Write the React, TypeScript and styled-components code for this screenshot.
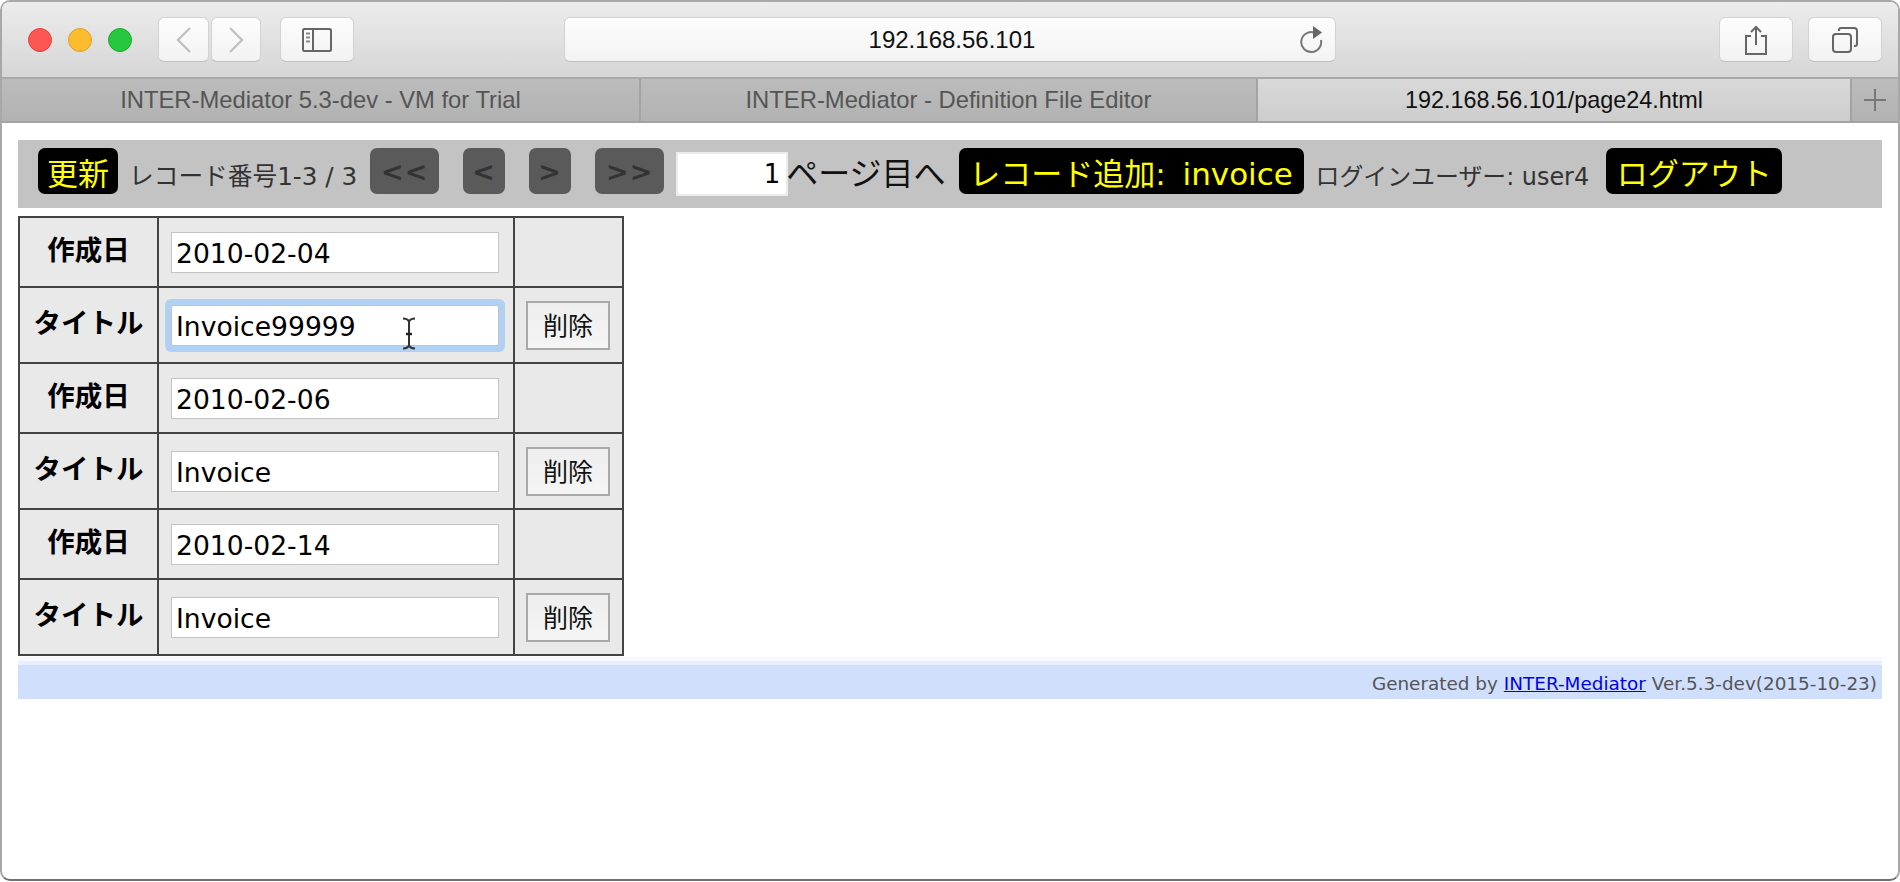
import React from 'react';
import styled, { createGlobalStyle } from 'styled-components';

const GlobalStyle = createGlobalStyle`
  html, body {
    margin: 0;
    padding: 0;
    background: #ffffff;
  }
  * {
    box-sizing: border-box;
  }
`;

const PAGE_FONT = `"DejaVu Sans", "Noto Sans CJK JP", sans-serif`;
const CHROME_FONT = `"Liberation Sans", "Noto Sans CJK JP", sans-serif`;

const Window = styled.div`
  width: 1900px;
  height: 881px;
  background: #ffffff;
  border: 2px solid #a8a8a8;
  border-bottom-color: #707070;
  border-radius: 10px;
  overflow: hidden;
`;

const TitleBar = styled.div`
  display: flex;
  align-items: center;
  height: 75px;
  padding: 0 16px 0 26px;
  background: linear-gradient(#ececec, #d6d6d6);
`;

const Lights = styled.div`
  display: flex;
  gap: 16px;
  margin-right: 26px;
`;

const Light = styled.span<{ $fill: string; $edge: string }>`
  width: 24px;
  height: 24px;
  border-radius: 50%;
  background: ${(p) => p.$fill};
  border: 1px solid ${(p) => p.$edge};
`;

const ToolButton = styled.div<{ $width: number }>`
  display: flex;
  align-items: center;
  justify-content: center;
  width: ${(p) => p.$width}px;
  height: 45px;
  background: linear-gradient(#fdfdfd, #f2f2f2);
  border: 1px solid #d2d2d2;
  border-bottom-color: #c0c0c0;
  border-radius: 6px;
`;

const NavGroup = styled.div`
  display: flex;
  gap: 2px;
  margin-right: 19px;
`;

const AddressBar = styled.div`
  display: grid;
  grid-template-columns: 1fr auto 1fr;
  align-items: center;
  width: 772px;
  height: 45px;
  margin-left: 210px;
  padding: 0 12px 0 16px;
  background: linear-gradient(#fdfdfd, #f3f3f3);
  border: 1px solid #d2d2d2;
  border-bottom-color: #c0c0c0;
  border-radius: 6px;
  font: 24px ${CHROME_FONT};
  color: #111111;
`;

const ReloadSlot = styled.div`
  display: flex;
  justify-content: flex-end;
`;

const RightGroup = styled.div`
  display: flex;
  gap: 15px;
  margin-left: auto;
`;

const TabStrip = styled.div`
  display: flex;
  height: 46px;
  border-top: 2px solid #a9a9a9;
  border-bottom: 2px solid #a3a3a3;
  font: 23.8px ${CHROME_FONT};
`;

const Tab = styled.div<{ $width: number; $active?: boolean }>`
  display: flex;
  align-items: center;
  justify-content: center;
  width: ${(p) => p.$width}px;
  flex: none;
  border-right: 2px solid #a3a3a3;
  color: ${(p) => (p.$active ? '#111111' : '#555555')};
  font-size: ${(p) => (p.$active ? '23.4px' : 'inherit')};
  background: ${(p) =>
    p.$active
      ? 'linear-gradient(#d9d9d9, #cdcdcd)'
      : 'linear-gradient(#bcbcbc, #b2b2b2)'};
`;

const NewTab = styled.div`
  flex: 1;
  display: flex;
  align-items: center;
  justify-content: center;
  background: linear-gradient(#bcbcbc, #b2b2b2);
`;

const Page = styled.div`
  padding: 17px 16px 0 16px;
  font-family: ${PAGE_FONT};
`;

const Navigator = styled.div`
  display: flex;
  align-items: center;
  height: 68px;
  padding: 0 0 6px 20px;
  background: #c3c3c3;
`;

const YellowButton = styled.div<{ $width: number; $gap: number }>`
  display: flex;
  align-items: center;
  justify-content: center;
  flex: none;
  width: ${(p) => p.$width}px;
  height: 46px;
  margin-right: ${(p) => p.$gap}px;
  background: #000000;
  border-radius: 7px;
  color: #ffff00;
  font-size: 31px;
  word-spacing: 7px;
  white-space: nowrap;
`;

const NavLabel = styled.span<{ $size: number; $gap: number }>`
  margin: 6px ${(p) => p.$gap}px 0 0;
  font-size: ${(p) => p.$size}px;
  color: #333333;
  white-space: nowrap;
`;

const PageButton = styled.div<{ $width: number; $gap: number }>`
  display: flex;
  align-items: center;
  justify-content: center;
  flex: none;
  width: ${(p) => p.$width}px;
  height: 46px;
  margin-right: ${(p) => p.$gap}px;
  background: #5a5a5a;
  border-radius: 7px;
  color: #333333;
  font-size: 27px;
  font-weight: 600;
  letter-spacing: 1px;
`;

const PageInput = styled.input`
  flex: none;
  width: 112px;
  height: 44px;
  padding: 0 6px;
  margin-top: 6px;
  background: #ffffff;
  border: 2px solid #ebebeb;
  outline: none;
  text-align: right;
  font: 26px ${PAGE_FONT};
  color: #000000;
`;

const GoLabel = styled.span`
  margin: 0 13px 0 -2px;
  font-size: 32px;
  color: #111111;
  white-space: nowrap;
`;

const RecordTable = styled.table`
  width: 604px;
  margin-top: 8px;
  border-collapse: collapse;
  table-layout: fixed;
  background: #e9e9e9;
`;

const LabelCell = styled.th`
  border: 2px solid #444444;
  padding: 0 0 8px;
  font: 600 27.5px ${PAGE_FONT};
  color: #000000;
`;

const ValueCell = styled.td`
  position: relative;
  border: 2px solid #444444;
  padding: 0 0 0 12px;
`;

const ActionCell = styled.td`
  border: 2px solid #444444;
  padding: 0 0 0 11px;
`;

const Row = styled.tr<{ $height: number }>`
  height: ${(p) => p.$height}px;
`;

const FieldInput = styled.input<{ $focused?: boolean }>`
  display: block;
  width: 328px;
  height: 41px;
  padding: 2px 4px 0;
  background: #ffffff;
  border: 1px solid #c4c4c4;
  outline: none;
  font: 26.6px ${PAGE_FONT};
  color: #000000;
  box-shadow: ${(p) => (p.$focused ? '0 0 0 6px #b0d0f4' : 'none')};
  border-radius: ${(p) => (p.$focused ? '2px' : '0')};
`;

const DeleteButton = styled.div`
  display: flex;
  align-items: center;
  justify-content: center;
  width: 84px;
  height: 49px;
  padding-bottom: 3px;
  background: linear-gradient(#eeeeee, #f5f5f5);
  border: 2px solid #a9a9a9;
  font-size: 25px;
  color: #111111;
`;

const TextCursor = styled.svg`
  position: absolute;
  left: 243px;
  top: 29px;
`;

const Footer = styled.div`
  display: flex;
  align-items: flex-end;
  justify-content: flex-end;
  height: 42px;
  margin-top: 1px;
  padding: 0 5px 5px 0;
  background: linear-gradient(#f5f8ff 0 4px, #e8efff 4px 8px, #d0e0fc 8px);
  font-size: 18.4px;
  color: #555555;
  white-space: nowrap;
`;

const FooterLink = styled.a`
  margin: 0 6px;
  color: #0000ee;
  text-decoration: underline;
`;

function Chevron({ flip }: { flip?: boolean }): JSX.Element {
  return (
    <svg width="16" height="26" viewBox="0 0 16 26" fill="none">
      <path
        d={flip ? 'M2 1l12 12L2 25' : 'M14 1L2 13l12 12'}
        stroke="#c0c0c0"
        strokeWidth="2.4"
      />
    </svg>
  );
}

function SidebarIcon(): JSX.Element {
  return (
    <svg width="30" height="26" viewBox="0 0 30 26" fill="none">
      <rect x="1" y="2" width="28" height="22" rx="1.5" stroke="#666" strokeWidth="2" />
      <path d="M11 2v22" stroke="#666" strokeWidth="2" />
      <path d="M4 6.5h4M4 10.5h4M4 14.5h4" stroke="#888" strokeWidth="2" />
    </svg>
  );
}

function ReloadIcon(): JSX.Element {
  return (
    <svg width="24" height="28" viewBox="0 0 24 28" fill="none">
      <path d="M15 6.5A10 10 0 1 0 22 14" stroke="#777" strokeWidth="2" />
      <path d="M14 0l9 6.5-9 6.5z" fill="#666" />
    </svg>
  );
}

function ShareIcon(): JSX.Element {
  return (
    <svg width="24" height="30" viewBox="0 0 24 30" fill="none">
      <path d="M7 11H2v18h20V11h-5" stroke="#666" strokeWidth="2" />
      <path d="M12 20V2M7 7l5-5 5 5" stroke="#666" strokeWidth="2" />
    </svg>
  );
}

function TabsIcon(): JSX.Element {
  return (
    <svg width="26" height="26" viewBox="0 0 26 26" fill="none">
      <rect x="1" y="7" width="18" height="18" rx="3" stroke="#666" strokeWidth="2" />
      <path d="M7 4V3a2 2 0 0 1 2-2h13a3 3 0 0 1 3 3v13a2 2 0 0 1-2 2h-1" stroke="#666" strokeWidth="2" />
    </svg>
  );
}

function PlusIcon(): JSX.Element {
  return (
    <svg width="22" height="22" viewBox="0 0 22 22">
      <path d="M11 0v22M0 11h22" stroke="#777" strokeWidth="2" />
    </svg>
  );
}

function IBeam(): JSX.Element {
  return (
    <TextCursor width="14" height="33" viewBox="0 0 14 33" fill="none">
      <path d="M1 1.5c3 0 5 1 6 3 1-2 3-3 6-3M7 4.5v24M1 31.5c3 0 5-1 6-3 1 2 3 3 6 3" stroke="#333" strokeWidth="2" />
      <path d="M4 17h6" stroke="#222" strokeWidth="2.4" />
    </TextCursor>
  );
}

const RECORDS = [
  { date: '2010-02-04', title: 'Invoice99999', focused: true },
  { date: '2010-02-06', title: 'Invoice', focused: false },
  { date: '2010-02-14', title: 'Invoice', focused: false },
];

export default function App(): JSX.Element {
  return (
    <React.Fragment>
      <GlobalStyle />
      <Window>
        <TitleBar>
          <Lights>
            <Light $fill="#fc5753" $edge="#e0443e" />
            <Light $fill="#fdbc2e" $edge="#de9f24" />
            <Light $fill="#27c840" $edge="#1dad2b" />
          </Lights>
          <NavGroup>
            <ToolButton $width={51}>
              <Chevron />
            </ToolButton>
            <ToolButton $width={50}>
              <Chevron flip />
            </ToolButton>
          </NavGroup>
          <ToolButton $width={74}>
            <SidebarIcon />
          </ToolButton>
          <AddressBar>
            <span />
            <span>192.168.56.101</span>
            <ReloadSlot>
              <ReloadIcon />
            </ReloadSlot>
          </AddressBar>
          <RightGroup>
            <ToolButton $width={74}>
              <ShareIcon />
            </ToolButton>
            <ToolButton $width={74}>
              <TabsIcon />
            </ToolButton>
          </RightGroup>
        </TitleBar>
        <TabStrip>
          <Tab $width={639}>INTER-Mediator 5.3-dev - VM for Trial</Tab>
          <Tab $width={617}>INTER-Mediator - Definition File Editor</Tab>
          <Tab $width={594} $active>
            192.168.56.101/page24.html
          </Tab>
          <NewTab>
            <PlusIcon />
          </NewTab>
        </TabStrip>
        <Page>
          <Navigator>
            <YellowButton $width={80} $gap={11}>更新</YellowButton>
            <NavLabel $size={24.7} $gap={13}>レコード番号1-3 / 3</NavLabel>
            <PageButton $width={69} $gap={24}>{'<<'}</PageButton>
            <PageButton $width={42} $gap={24}>{'<'}</PageButton>
            <PageButton $width={42} $gap={24}>{'>'}</PageButton>
            <PageButton $width={69} $gap={12}>{'>>'}</PageButton>
            <PageInput readOnly value="1" />
            <GoLabel>ページ目へ</GoLabel>
            <YellowButton $width={345} $gap={12}>レコード追加: invoice</YellowButton>
            <NavLabel $size={23.9} $gap={17}>ログインユーザー: user4</NavLabel>
            <YellowButton $width={176} $gap={0}>ログアウト</YellowButton>
          </Navigator>
          <RecordTable>
            <colgroup>
              <col style={{ width: 139 }} />
              <col style={{ width: 356 }} />
              <col style={{ width: 109 }} />
            </colgroup>
            <tbody>
              {RECORDS.map((record) => (
                <React.Fragment key={record.date}>
                  <Row $height={70}>
                    <LabelCell>作成日</LabelCell>
                    <ValueCell>
                      <FieldInput readOnly value={record.date} />
                    </ValueCell>
                    <ActionCell />
                  </Row>
                  <Row $height={76}>
                    <LabelCell>タイトル</LabelCell>
                    <ValueCell>
                      <FieldInput readOnly value={record.title} $focused={record.focused} />
                      {record.focused && <IBeam />}
                    </ValueCell>
                    <ActionCell>
                      <DeleteButton>削除</DeleteButton>
                    </ActionCell>
                  </Row>
                </React.Fragment>
              ))}
            </tbody>
          </RecordTable>
          <Footer>
            Generated by
            <FooterLink href="#">INTER-Mediator</FooterLink>
            Ver.5.3-dev(2015-10-23)
          </Footer>
        </Page>
      </Window>
    </React.Fragment>
  );
}
